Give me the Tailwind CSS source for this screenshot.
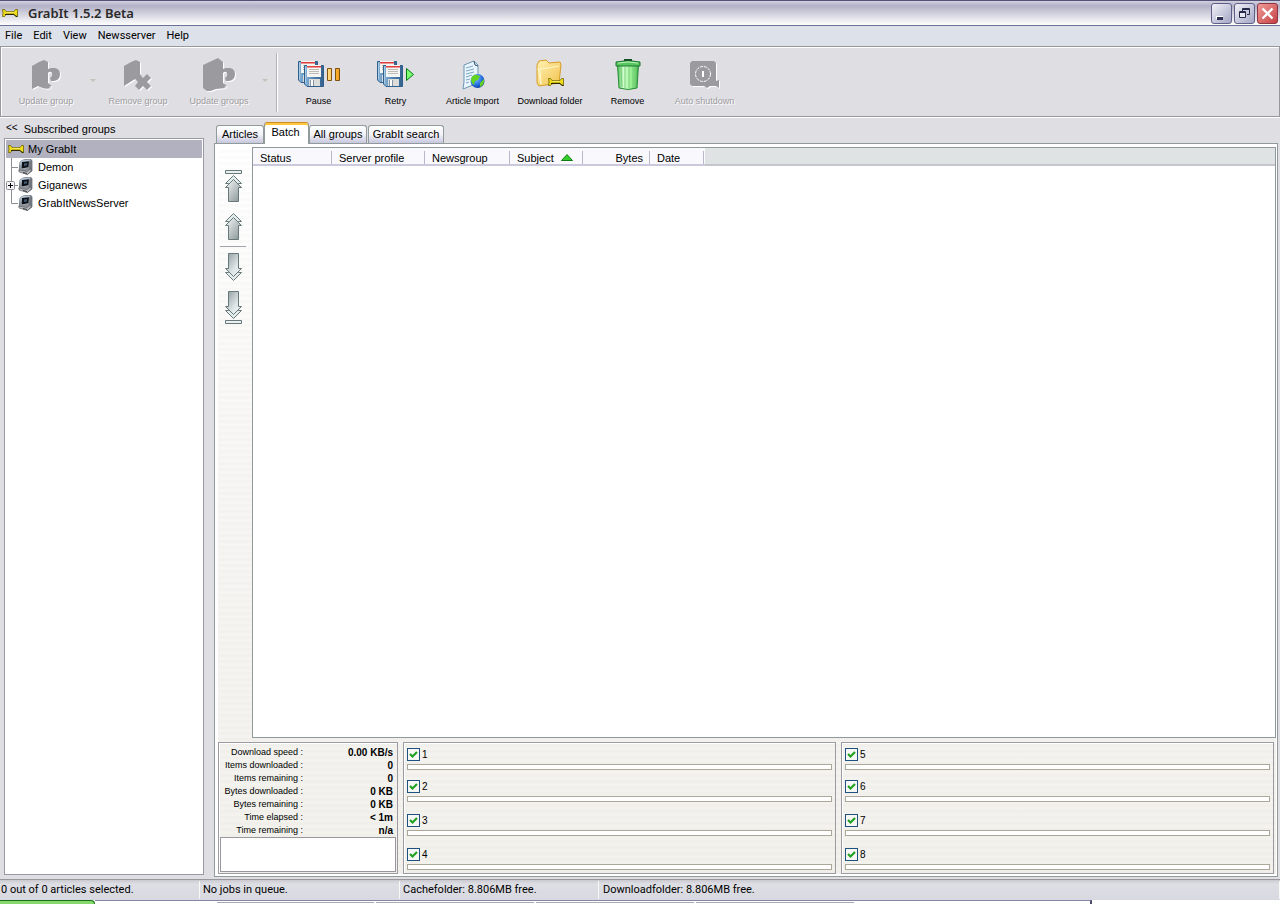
<!DOCTYPE html>
<html lang="en">
<head>
<meta charset="utf-8">
<title>GrabIt 1.5.2 Beta</title>
<script src="https://cdn.jsdelivr.net/npm/@tailwindcss/browser@4"></script>
</head>
<body class="flex h-screen flex-col overflow-hidden bg-[#dfdee3] font-['Liberation_Sans',Arial,sans-serif] text-[11px] leading-[13px] text-black">

<svg class="absolute h-0 w-0" aria-hidden="true">
  <defs>
    <linearGradient id="steel" x1="0" y1="0" x2="1" y2="1"><stop offset="0" stop-color="#f8fbfb"/><stop offset="1" stop-color="#84908f"/></linearGradient>
    <linearGradient id="steelDown" x1="0" y1="0" x2="1" y2="1"><stop offset="0" stop-color="#8b979a"/><stop offset=".6" stop-color="#dde5e6"/><stop offset="1" stop-color="#f4f8f8"/></linearGradient>
    <linearGradient id="blue" x1="0" x2="1"><stop offset="0" stop-color="#8db8da"/><stop offset=".5" stop-color="#4d7fae"/><stop offset="1" stop-color="#34628e"/></linearGradient>
    <linearGradient id="orange" x1="0" x2="1"><stop offset="0" stop-color="#ffe08a"/><stop offset="1" stop-color="#f39b10"/></linearGradient>
    <linearGradient id="folderFill" x1="0" y1="0" x2="1" y2="1"><stop offset="0" stop-color="#fff2b4"/><stop offset="1" stop-color="#f2c14c"/></linearGradient>
    <linearGradient id="green" x1="0" x2="1"><stop offset="0" stop-color="#4fbf58"/><stop offset=".3" stop-color="#d5ffd0"/><stop offset=".7" stop-color="#8fee8c"/><stop offset="1" stop-color="#3fae48"/></linearGradient>
    <radialGradient id="sea" cx=".35" cy=".3" r=".8"><stop offset="0" stop-color="#8fc4ff"/><stop offset=".6" stop-color="#2470e0"/><stop offset="1" stop-color="#0c2f90"/></radialGradient>
    <symbol id="bone" viewBox="0 0 16 10">
      <path d="M.5 1.500h2l1.500 2h8l1.500-2h2v7h-2l-1.500-2H4l-1.500 2h-2l.500-3.500z" fill="#f0dc18" stroke="#6b6206" stroke-width=".8"/>
      <path d="M3 6.800l1-.500h8l2 2h1.500" fill="none" stroke="#1c1a02"/>
      <path d="M4.500 4.300h7" fill="none" stroke="#fff78c" stroke-width=".7"/>
    </symbol>
    <symbol id="pc" viewBox="0 0 16 16">
      <path d="M5 1l7-1 2 1.500V12l-4.500 3.500L1 12l.5-3L2 3z" fill="#8c9198" stroke="#555b62" stroke-width=".7"/>
      <path d="M2 3l3-2 7-.5-1 2-1 6.500-7 1z" fill="#b4c4d6"/>
      <path d="M4 3l7-.7-.6 6L3.500 9.500z" fill="#0d1014"/><path d="M6 4.500l3-.4v2.500L6 7z" fill="#3e566e"/>
      <path d="M11.500 2.500L14 1.500V11l-3 3z" fill="#70767e"/>
      <path d="M1 11l8 1.500 4-3V12l-3.500 3.500L1 13z" fill="#b4b6b9" stroke="#55585c" stroke-width=".6"/>
      <path d="M5 13.500l4 1" stroke="#394048"/>
    </symbol>
    <symbol id="disk" viewBox="0 0 20 22">
      <path d="M.5.5h19v21H3l-2.500-2.500z" fill="url(#blue)" stroke="#2f5f8a"/>
      <path d="M1.500 1.500v17" stroke="#a9cbe4"/>
      <path d="M3 0h14v12H3z" fill="#f4f4f2"/><path d="M3 1h14v1.500H3z" fill="#e03c3c"/>
      <path d="M5 4.500h10M5 6.500h10M5 8.500h10" stroke="#bcbab4"/>
      <path d="M5 14h11v7H5z" fill="#dcdcda"/><path d="M6 15h4v6H6z" fill="#8496a6"/><path d="M7 15h2v6H7z" fill="#ffffff"/>
    </symbol>
  </defs>
</svg>

<header class="flex h-[26px] shrink-0 items-center border-y border-t-[#56537a] border-b-[#6e7196] bg-linear-to-b from-[#d2d1e0] via-[#b3b2c7] via-20% to-white pl-[2px] pr-[2px]">
  <svg class="h-[10px] w-4" aria-hidden="true"><use href="#bone"/></svg>
  <h1 class="ml-[10px] flex-1 font-['Noto_Sans',sans-serif] text-[13px] font-semibold leading-5 text-[#2a2a2a]">GrabIt 1.5.2 Beta</h1>
  <div class="flex gap-[2px]">
    <button aria-label="Minimize" class="h-[21px] w-[21px] rounded-[3px] border border-[#5f6088] bg-linear-to-br from-[#f2f2f8] to-[#a4a6c4]"><svg viewBox="0 0 19 19" class="h-[19px] w-[19px]"><path d="M4 12h7v3H4z" fill="#fff"/><path d="M5 13h6v3H5z" fill="#2c2f50"/></svg></button>
    <button aria-label="Restore" class="h-[21px] w-[21px] rounded-[3px] border border-[#5f6088] bg-linear-to-br from-[#f2f2f8] to-[#a4a6c4]"><svg viewBox="0 0 19 19" class="h-[19px] w-[19px]" fill="none"><path d="M7.500 7V4.500h7v6H12M7 5.500h8" stroke="#262a48"/><path d="M4.500 7.500h6v6h-6zM4 8.500h7" fill="#e8e8f2" stroke="#262a48"/></svg></button>
    <button aria-label="Close" class="h-[21px] w-[21px] rounded-[3px] border border-[#8d3542] bg-linear-to-br from-[#ef9a98] to-[#c43f45]"><svg viewBox="0 0 19 19" class="h-[19px] w-[19px]"><path d="M4.500 4.500l10 10m0-10l-10 10" stroke="#fff" stroke-width="2.400"/></svg></button>
  </div>
</header>

<nav class="flex h-5 shrink-0 items-center gap-[11px] bg-[#dde1ea] pb-[2px] pl-[5px] font-['Roboto',sans-serif]">
  <button>File</button><button>Edit</button><button>View</button><button>Newsserver</button><button>Help</button>
</nav>

<div class="flex h-[71px] shrink-0 border border-[#98989c] bg-[#dfdee3] pt-[10px] text-[9px] leading-3 shadow-[inset_1px_1px_0_#fff]">
  <button disabled class="flex w-[90px] flex-col items-center gap-1 text-[#9c9ca0] [text-shadow:1px_1px_0_#fff]"><svg viewBox="0 0 30 34" class="h-[34px] w-[30px] fill-[#9b9a9f] drop-shadow-[1px_1px_0_#fff]"><path d="M1 9l7-4 5-2 4 2v7l3-1h4q5 1 5 6 0 6-6 7h-3l-1-3 2-2q1-5-3-4l-1 1v10l4 3-3 1 2 1q-5 2-11-1l-2-1-6 3z"/></svg>Update group</button>
  <button disabled aria-label="Update group options" class="flex w-1 items-center justify-center pb-3"><svg viewBox="0 0 6 3" class="h-[3px] w-[6px] shrink-0"><path d="M0 0h6L3 3z" fill="#c3c3bc"/></svg></button>
  <button disabled class="flex w-[86px] flex-col items-center gap-1 text-[#9c9ca0] [text-shadow:1px_1px_0_#fff]"><svg viewBox="0 0 30 34" class="h-[34px] w-[30px] fill-[#9b9a9f] drop-shadow-[1px_1px_0_#fff]"><path d="M1 9l7-4 5-2 4 2v12l3 4 4-4 4 4-4 4 4 4-4 4-4-4-4 4-4-4 3-4-3-3-11 7z"/></svg>Remove group</button>
  <button disabled class="flex w-[76px] flex-col items-center gap-1 text-[#9c9ca0] [text-shadow:1px_1px_0_#fff]"><svg class="h-[34px] w-[33px] fill-[#9b9a9f] drop-shadow-[1px_1px_0_#fff]" viewBox="0 0 33 34"><path d="M0 8l15-7 5 4v7l3-1h4q5 1 5 6 0 6-6 7h-3l-1-3 2-2q1-5-3-4l-1 1v10l4 3-3 1 2 1-10 1-8 3-5-4z"/></svg>Update groups</button>
  <button disabled aria-label="Update groups options" class="ml-[5px] flex w-[6px] items-center justify-center pb-3"><svg viewBox="0 0 6 3" class="h-[3px] w-[6px]"><path d="M0 0h6L3 3z" fill="#c3c3bc"/></svg></button>
  <div class="-mt-1 mb-1 ml-2 w-[2px] border-l border-r border-l-[#b2b2b6] border-r-white"></div>
  <div class="ml-[2px] flex">
    <button class="flex w-[77px] flex-col items-center gap-1"><svg viewBox="0 0 42 34" class="h-[34px] w-[42px]"><use href="#disk" x="0" y="4" width="20" height="22"/><use href="#disk" x="6" y="8" width="20" height="22" /><path d="M29.500 11.500h4v12h-4zM37.500 11.500h4v12h-4z" fill="url(#orange)" stroke="#805010"/></svg>Pause</button>
    <button class="flex w-[77px] flex-col items-center gap-1"><svg viewBox="0 0 38 34" class="h-[34px] w-[38px]"><use href="#disk" x="0" y="4" width="20" height="22"/><use href="#disk" x="6" y="8" width="20" height="22"/><path d="M29.500 11.500v12l7-6z" fill="#7aff70" stroke="#087818"/></svg>Retry</button>
    <button class="flex w-[77px] flex-col items-center gap-1"><svg viewBox="0 0 26 34" class="h-[34px] w-[26px]"><path d="M4 8l10-4 4 4v18L3 32l1-7z" fill="#eaf6ff" stroke="#6c95b0"/><path d="M14 4l1 4 3 1" fill="#cce8f8" stroke="#35506a"/><path d="M6 11l7-2M6 14l8-2M6 17l8-2M6 20l6-2M6 23l4-1M6 26l3-1" stroke="#7ba6c0"/><circle cx="17.500" cy="24" r="7" fill="url(#sea)"/><path d="M11 22q2-5 6-4l3 1-2 4-3 1-1 4q-3-2-3-6zm9 4l4-4q1 5-4 8z" fill="#63d422"/></svg>Article Import</button>
    <button class="flex w-[78px] flex-col items-center gap-1"><svg viewBox="0 0 30 34" class="h-[34px] w-[30px]"><path d="M2 8l2-4 7-1 3 3 11-1 1 3-2 18-20 3-2-3z" fill="url(#folderFill)" stroke="#d79c26"/><path d="M3 11l3 16L5 12q10-1 19-3" fill="none" stroke="#fff8cc"/><use href="#bone" x="13" y="20" width="16" height="10"/></svg>Download folder</button>
    <button class="flex w-[77px] flex-col items-center gap-1"><svg viewBox="0 0 26 34" class="h-[34px] w-[26px]"><path d="M2.500 8h21L22 31q-9 3-18 0z" fill="url(#green)" stroke="#278c35"/><path d="M6 10l1 20M10 10v21M14 10v21M18 10v21M21 10l-1 20" stroke="#78cd7a"/><path d="M1 5q12-3 24 0v4H1z" fill="#58c65e" stroke="#1d7430"/><path d="M3 6q10-2 20 0" fill="none" stroke="#baf5b8"/><path d="M10 4V3h6v1" fill="none" stroke="#174f28" stroke-width="2"/></svg>Remove</button>
    <button disabled class="flex w-[77px] flex-col items-center gap-1 text-[#9c9ca0] [text-shadow:1px_1px_0_#fff]"><svg viewBox="0 0 30 34" class="h-[34px] w-[30px] drop-shadow-[1px_1px_0_#fff]"><path d="M0 6l2-2h22l2 2v18l3-1v8l-3-2h-6l-3 2-3-2H2l-2-2z" fill="#9b9a9f"/><circle cx="13" cy="17" r="7.500" fill="none" stroke="#fff" stroke-dasharray="3 1"/><path d="M13 14v6" stroke="#fff" stroke-width="2"/></svg>Auto shutdown</button>
  </div>
</div>

<main class="flex min-h-0 flex-1 border-t border-white">
  <aside class="flex w-[204px] shrink-0 flex-col pl-1">
    <div class="flex h-5 items-center gap-[6px] pl-[2px] pt-[2px]"><button aria-label="Collapse" class="-mt-1 text-[10px]">&lt;&lt;</button><h2>Subscribed groups</h2></div>
    <ul class="mb-[4px] flex-1 border border-[#9a9aa4] bg-white p-px leading-[18px]">
      <li class="flex items-center gap-1 bg-[#b1b1bf] pl-[2px]"><svg class="h-[10px] w-4"><use href="#bone"/></svg>My GrabIt</li>
      <li class="flex items-center"><svg viewBox="0 0 12 18" class="h-[18px] w-3" stroke="#8d8d94"><path d="M5.500 0v18M6 9.500h6"/></svg><svg class="mr-1 h-4 w-4"><use href="#pc"/></svg>Demon</li>
      <li class="flex items-center"><svg viewBox="0 0 12 18" class="h-[18px] w-3" stroke="#8d8d94"><path d="M5.500 0v18M6 9.500h6"/><rect x=".5" y="5.500" width="8" height="8" rx="1" fill="#f4f4f8"/><path d="M2 9.500h5M4.500 7v5" stroke="#000"/></svg><svg class="mr-1 h-4 w-4"><use href="#pc"/></svg>Giganews</li>
      <li class="flex items-center"><svg viewBox="0 0 12 18" class="h-[18px] w-3" stroke="#8d8d94" fill="none"><path d="M5.500 0v9.500H12"/></svg><svg class="mr-1 h-4 w-4"><use href="#pc"/></svg>GrabItNewsServer</li>
    </ul>
  </aside>

  <section class="ml-[10px] mr-[2px] flex min-w-0 flex-1 flex-col pb-[2px] pt-1">
    <div role="tablist" class="relative z-10 -mb-px flex items-end pl-[2px]">
      <button role="tab" class="mb-px h-[18px] w-[48px] rounded-t-[3px] border border-b-0 border-[#919b9c] bg-linear-to-b from-white via-[#f2f2f8] to-[#c7c7de]">Articles</button>
      <button role="tab" aria-selected="true" class="h-[22px] w-[45px] rounded-t-[3px] border border-b-0 border-[#919b9c] border-t-[#d48b24] bg-white pb-[3px] pr-[2px] shadow-[inset_0_2px_0_#ffc73c]">Batch</button>
      <button role="tab" class="mb-px h-[18px] w-[58px] rounded-t-[3px] border border-b-0 border-[#919b9c] bg-linear-to-b from-white via-[#f2f2f8] to-[#c7c7de]">All groups</button>
      <button role="tab" class="mb-px ml-px h-[18px] w-[76px] rounded-t-[3px] border border-b-0 border-[#919b9c] bg-linear-to-b from-white via-[#f2f2f8] to-[#c7c7de]">GrabIt search</button>
    </div>
    <div class="flex min-h-0 flex-1 flex-col border border-[#919b9c] bg-white p-[3px] pb-[2px] pr-px pt-[3px]">
      <div class="flex min-h-0 flex-1 flex-col bg-[repeating-linear-gradient(to_bottom,#0000_0_3px,#00000003_3px_6px),linear-gradient(to_bottom,#ffffff,#f7f6f4_45%,#f2f1ec)]">
        <div class="flex min-h-0 flex-1">
          <div class="flex w-[34px] shrink-0 flex-col items-center pr-1 pt-[22px]">
            <button aria-label="Move to top" class="h-[34px]"><svg viewBox="0 0 20 34" class="h-[34px] w-5"><path d="M2.500 1.500h16v3h-16z" fill="#e9f0ef" stroke="#66787a"/><path d="M2.500 14.500l8-8 8 8h-3v3l-5-4-5 4v-3z" fill="#e3ebeb" stroke="#66787a"/><path d="M2.500 18.500l8-8 8 8h-3v14h-10v-14z" fill="url(#steel)" stroke="#66787a"/></svg></button>
            <button aria-label="Move up" class="mt-2 h-[30px]"><svg viewBox="0 0 20 30" class="h-[30px] w-5"><path d="M2.500 10.500l8-8 8 8h-3v3l-5-4-5 4v-3z" fill="#e3ebeb" stroke="#66787a"/><path d="M2.500 14.500l8-8 8 8h-3v14h-10v-14z" fill="url(#steel)" stroke="#66787a"/></svg></button>
            <div class="mt-[5px] h-px w-[26px] bg-[#a3a3a9]"></div>
            <button aria-label="Move down" class="mt-[5px] h-[30px]"><svg viewBox="0 0 20 30" class="h-[30px] w-5"><path d="M2.500 20.500l8 8 8-8h-3v-3l-5 4-5-4v3z" fill="#e3ebeb" stroke="#66787a"/><path d="M5.500 1.500h10v15h3l-8 8-8-8h3z" fill="url(#steelDown)" stroke="#66787a"/></svg></button>
            <button aria-label="Move to bottom" class="mt-2 h-[34px]"><svg viewBox="0 0 20 34" class="h-[34px] w-5"><path d="M2.500 20.500l8 8 8-8h-3v-3l-5 4-5-4v3z" fill="#e3ebeb" stroke="#66787a"/><path d="M5.500 1.500h10v15h3l-8 8-8-8h3z" fill="url(#steelDown)" stroke="#66787a"/><path d="M2.500 30.500h16v3h-16z" fill="#e9f0ef" stroke="#66787a"/></svg></button>
          </div>
          <div class="min-w-0 flex-1 border border-[#8f9a9c] bg-white">
            <table class="w-full table-fixed border-separate border-spacing-0 text-left">
              <thead><tr class="[&>th]:h-[18px] [&>th]:border-b-2 [&>th]:border-b-[#cbc9dc] [&>th]:bg-[#f9f9fd] [&>th]:p-0 [&>th]:pt-[3px] [&>th]:font-normal [&>th]:leading-[13px] [&>th>div]:h-[13px] [&>th>div]:leading-[15px]">
                <th class="w-[79px]"><div class="border-r border-[#b9b8ca] pl-[7px]">Status</div></th>
                <th class="w-[93px]"><div class="border-r border-[#b9b8ca] pl-[7px]">Server profile</div></th>
                <th class="w-[85px]"><div class="border-r border-[#b9b8ca] pl-[7px]">Newsgroup</div></th>
                <th class="w-[73px]" aria-sort="ascending"><div class="flex items-center gap-[7px] border-r border-[#b9b8ca] pl-[7px]"><span class="pt-[2px] leading-[13px]">Subject</span><svg viewBox="0 0 12 7" class="h-[7px] w-3"><path d="M.5 6.500L6 .5l5.500 6z" fill="#35ce28" stroke="#107a14"/></svg></div></th>
                <th class="w-[67px] text-right"><div class="border-r border-[#b9b8ca] pr-[6px]">Bytes</div></th>
                <th class="w-[55px]"><div class="mr-px border-r border-[#b9b8ca] pl-[7px]">Date</div></th>
                <td class="border-b-2 border-b-[#c5c6cb] bg-[#e0e3e3]"></td>
              </tr></thead>
            </table>
          </div>
        </div>

        <div class="mt-1 flex gap-[5px] pr-[2px]">
          <dl class="grid w-[180px] shrink-0 grid-cols-[84px_1fr] border border-[#9b9ba1] px-px pb-px pt-[3px] text-[9px] leading-[13px] shadow-[inset_1px_1px_0_#fff] [&>dd]:pr-[3px] [&>dd]:text-right [&>dd]:text-[10px] [&>dd]:font-bold [&>dd]:leading-[13px] [&>dt]:pr-px [&>dt]:text-right [&>dt]:whitespace-nowrap">
            <dt>Download speed :</dt><dd>0.00 KB/s</dd>
            <dt>Items downloaded :</dt><dd>0</dd>
            <dt>Items remaining :</dt><dd>0</dd>
            <dt>Bytes downloaded :</dt><dd>0 KB</dd>
            <dt>Bytes remaining :</dt><dd>0 KB</dd>
            <dt>Time elapsed :</dt><dd>&lt; 1m</dd>
            <dt>Time remaining :</dt><dd>n/a</dd>
            <div class="col-span-2 h-[35px] border border-[#97979d] bg-white"></div>
          </dl>
          <div id="left" class="flex-1 border border-[#9b9ba1] px-[3px] pb-[3px] pt-[5px] text-[10px] shadow-[inset_1px_1px_0_#fff]"></div>
          <div id="right" class="flex-1 border border-[#9b9ba1] px-[3px] pb-[3px] pt-[5px] text-[10px] shadow-[inset_1px_1px_0_#fff]"></div>
        </div>
      </div>
    </div>
  </section>
</main>

<footer class="flex h-[21px] shrink-0 items-center border-t border-[#97979c] bg-linear-to-b from-[#c9c9cf] via-[#dedfe5] via-20% to-[#d8d9e0] font-['Roboto',sans-serif]">
  <span class="w-[200px] border-r border-[#f8f8f4] pl-px leading-[18px]">0 out of 0 articles selected.</span>
  <span class="w-[200px] border-r border-[#f8f8f4] pl-[3px] leading-[18px]">No jobs in queue.</span>
  <span class="w-[199px] border-r border-[#f8f8f4] pl-[3px] leading-[18px]">Cachefolder: 8.806MB free.</span>
  <span class="flex-1 border-r border-[#f8f8f4] pl-1 leading-[18px]">Downloadfolder: 8.806MB free.</span>
</footer>
<div class="flex h-1 shrink-0 bg-white">
  <div class="w-[95px] rounded-tr-[4px] border-t border-r border-[#187018] bg-[#86d86c]"></div>
  <div class="flex w-[997px] border-t border-r-2 border-t-[#8585a8] border-r-[#4c4c68] pl-[122px] pt-[1px]">
    <div class="mr-[2px] w-[157px] border-t border-[#a9a9ae]"></div><div class="mr-[2px] w-[158px] border-t border-[#a9a9ae]"></div><div class="mr-[2px] w-[158px] border-t border-[#a9a9ae]"></div><div class="w-[158px] border-t border-[#a9a9ae]"></div>
  </div>
</div>

<template id="slot">
  <div class="mb-3 first:mb-[10px] last:mb-0">
    <label class="flex h-[13px] items-center gap-[2px]"><input type="checkbox" checked class="h-[13px] w-[13px] appearance-none border border-[#1c5180] bg-[url('data:image/svg+xml,%3Csvg%20xmlns=%22http://www.w3.org/2000/svg%22%20viewBox=%220%200%2011%2011%22%3E%3Cpath%20d=%22M2%205l2.500%202.500L9%203%22%20fill=%22none%22%20stroke=%22%2321a121%22%20stroke-width=%222.200%22/%3E%3C/svg%3E')] bg-[#f6f6f4]"><span></span></label>
    <div role="progressbar" aria-valuenow="0" class="mt-[3px] h-[6px] border border-[#aca899] bg-white"></div>
  </div>
</template>
<script>
  const template = document.getElementById('slot');
  for (let n = 1; n <= 8; n++) {
    const slot = template.content.cloneNode(true);
    slot.querySelector('span').textContent = n;
    slot.querySelector('[role=progressbar]').setAttribute('aria-label', 'Connection ' + n);
    document.getElementById(n < 5 ? 'left' : 'right').append(slot);
  }
</script>
</body>
</html>
